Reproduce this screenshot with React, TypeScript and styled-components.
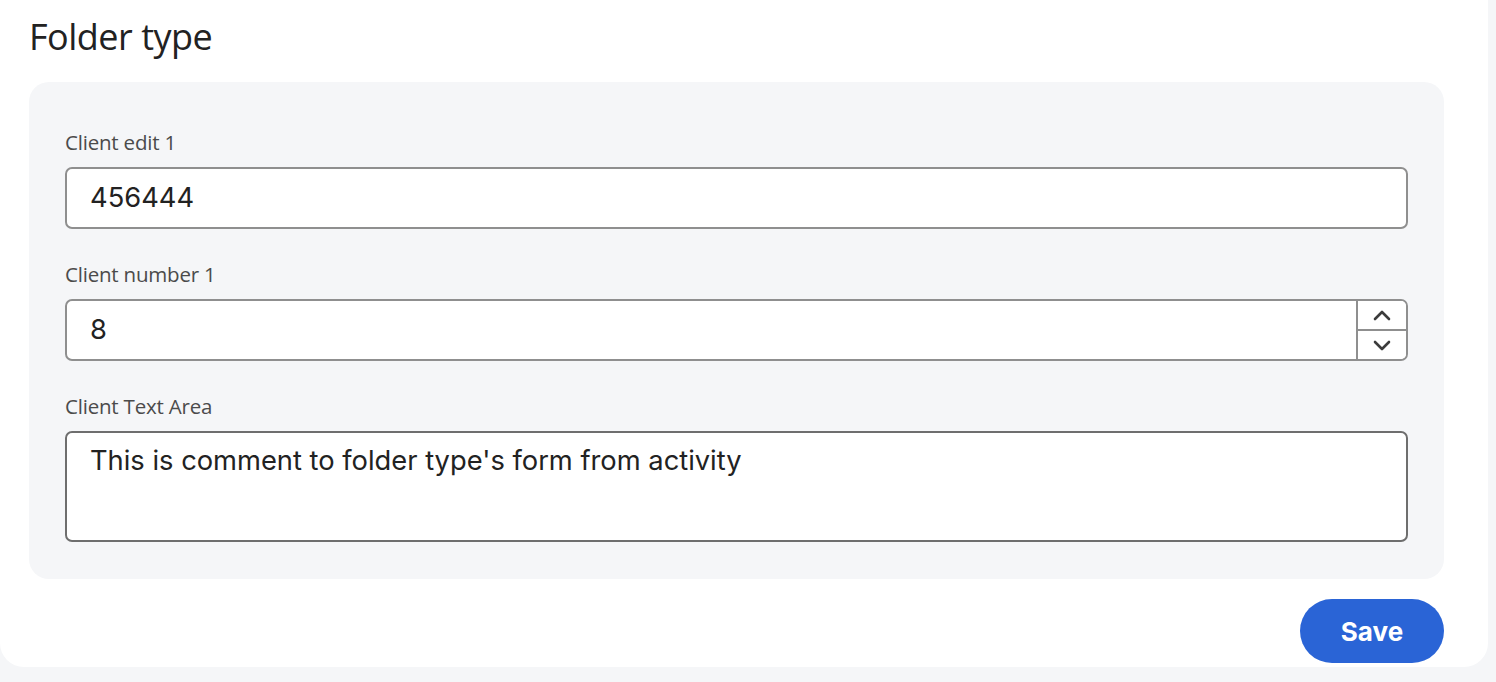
import styled, { createGlobalStyle } from "styled-components";

const GlobalStyle = createGlobalStyle`
	html, body {
		margin: 0;
		padding: 0;
		background: #f5f6f8;
	}
	body {
		font-family: "Open Sans", "Noto Sans", sans-serif;
		color: #222222;
	}
`;

const Page = styled.div`
	height: 682px;
	overflow: hidden;
`;

const Card = styled.section`
	width: 1488px;
	box-sizing: border-box;
	background: #ffffff;
	border-radius: 0 0 24px 24px;
	padding: 0 44px 4px 29px;
	display: flex;
	flex-direction: column;
`;

const Title = styled.h2`
	margin: 0;
	padding-top: 14px;
	height: 82px;
	box-sizing: border-box;
	font-family: "Open Sans", sans-serif;
	font-size: 36px;
	font-weight: 400;
	line-height: 46px;
	letter-spacing: -0.5px;
	color: #222222;
`;

const Panel = styled.div`
	background: #f5f6f8;
	border-radius: 20px;
	padding: 48px 36px 37px 36px;
	display: flex;
	flex-direction: column;
	gap: 33px;
`;

const Field = styled.div`
	display: flex;
	flex-direction: column;
	gap: 13px;
`;

const Label = styled.label`
	font-family: "Open Sans", sans-serif;
	font-size: 20.5px;
	line-height: 24px;
	letter-spacing: -0.2px;
	color: #4b4b4b;
`;

const Box = styled.div<{ $tall?: boolean; $dark?: boolean }>`
	height: ${(p) => (p.$tall ? "111px" : "62px")};
	box-sizing: border-box;
	background: #ffffff;
	border: 2px solid ${(p) => (p.$dark ? "#6e6e6e" : "#8f8f8f")};
	border-radius: 7px;
	display: flex;
	align-items: ${(p) => (p.$tall ? "flex-start" : "center")};
	overflow: hidden;
`;

const Value = styled.div<{ $tall?: boolean }>`
	flex: 1;
	padding: ${(p) => (p.$tall ? "10px 23px" : "0 23px")};
	font-family: Inter, "Liberation Sans", sans-serif;
	font-size: 27.3px;
	line-height: 36px;
	color: #222222;
`;

const Stepper = styled.div`
	width: 48px;
	align-self: stretch;
	border-left: 2px solid #8f8f8f;
	display: flex;
	flex-direction: column;
`;

const StepButton = styled.button`
	flex: 1;
	border: none;
	background: #ffffff;
	padding: 0;
	display: flex;
	align-items: center;
	justify-content: center;
	cursor: pointer;
	& + & {
		border-top: 2px solid #8f8f8f;
	}
`;

const Footer = styled.div`
	display: flex;
	justify-content: flex-end;
	padding-top: 20px;
`;

const SaveButton = styled.button`
	width: 144px;
	height: 64px;
	border: none;
	border-radius: 32px;
	background: #2a64d6;
	color: #ffffff;
	font-family: Inter, "Liberation Sans", sans-serif;
	font-size: 26px;
	font-weight: 700;
	cursor: pointer;
`;

function Chevron({ up }: { up?: boolean }) {
	return (
		<svg width="18" height="11" viewBox="0 0 18 11">
			<path
				d={up ? "M2 9 L9 2 L16 9" : "M2 2 L9 9 L16 2"}
				fill="none"
				stroke="#3c3c3c"
				strokeWidth="2.6"
				strokeLinecap="round"
				strokeLinejoin="round"
			/>
		</svg>
	);
}

function App() {
	return (
		<>
			<GlobalStyle />
			<Page>
				<Card>
					<Title>Folder type</Title>
					<Panel>
						<Field>
							<Label>Client edit 1</Label>
							<Box>
								<Value>456444</Value>
							</Box>
						</Field>
						<Field>
							<Label>Client number 1</Label>
							<Box>
								<Value>8</Value>
								<Stepper>
									<StepButton aria-label="Increase">
										<Chevron up />
									</StepButton>
									<StepButton aria-label="Decrease">
										<Chevron />
									</StepButton>
								</Stepper>
							</Box>
						</Field>
						<Field>
							<Label>Client Text Area</Label>
							<Box $tall $dark>
								<Value $tall>
									This is comment to folder type's form from activity
								</Value>
							</Box>
						</Field>
					</Panel>
					<Footer>
						<SaveButton>Save</SaveButton>
					</Footer>
				</Card>
			</Page>
		</>
	);
}

export default App;
